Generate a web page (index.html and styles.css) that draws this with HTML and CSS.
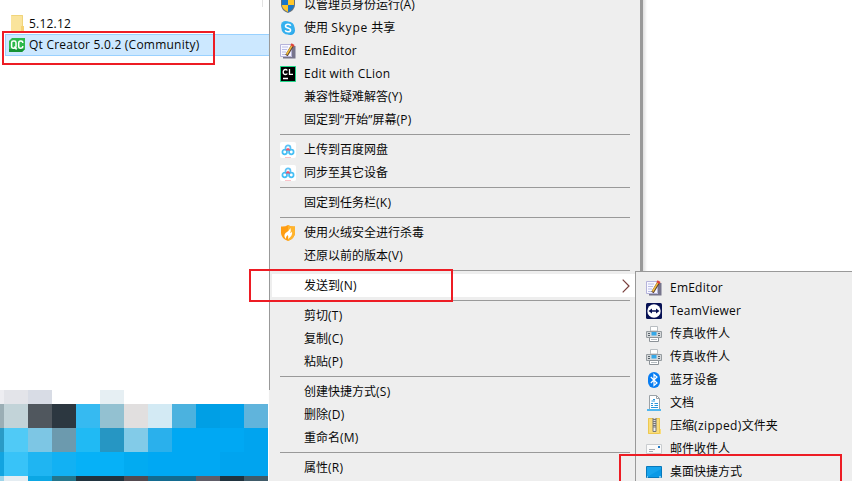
FILE: index.html
```
<!DOCTYPE html>
<html lang="zh-CN">
<head>
<meta charset="utf-8">
<title>Qt Creator</title>
<link rel="stylesheet" href="styles.css">
</head>
<body>
<svg width="0" height="0" class="defs">
  <defs>
    <g id="editor"><path d="M.5 1.500h11v12H.5z" fill="#f8f8ff" stroke="#b5b3da"/><path d="M2 4h6M2 6.500h5M2 9h4M2 11.500h4" stroke="#b9bce6"/><path d="M12 3h3.500v12.500H3V14h9z" fill="#77758c"/><path d="M12.800 2 6.500 12.500" stroke="#5a4030" stroke-width="2.800"/><path d="M12.300 2.200 6.600 11.500" stroke="#f3bd3c" stroke-width="1.600"/><path d="m11 1.200 3 1.800" stroke="#e0453a" stroke-width="2.200"/></g>
    <g id="cloud"><rect width="16" height="16" rx="2" fill="#fff"/><g fill="none" stroke-width="1.700"><circle cx="8" cy="5.800" r="2.500" stroke="#5cc2f7"/><circle cx="4.700" cy="10" r="2.300" stroke="#45bff5"/><circle cx="11.300" cy="10" r="2.300" stroke="#45bff5"/><path d="m6.300 8.300 1.700-1.500 1.800 1.700" stroke="#f0566d"/></g><path d="M5 15.500h6" stroke="#f6a8b0" stroke-width=".7"/></g>
    <g id="printer"><path d="M4.500.5h7V5h-7z" fill="#fff" stroke="#b8bdc1"/><path d="M.5 5.500h15v6H.5z" fill="#d5d8da" stroke="#969ca0"/><path d="M5.500 6h5v3.500h-5z" fill="#35a8e8"/><path d="M2 7.500h2M2 9.500h2M12 7.500h2M12 9.500h2" stroke="#59636b"/><path d="M3.500 11.500h9v4h-9z" fill="#fff" stroke="#8c9297"/><path d="M5 13.500h6" stroke="#b5bcc1"/></g>
  </defs>
</svg>
<div class="screen">
  <div class="explorer">
    <div class="column-edge"></div>
    <div class="files">
      <div class="file">
        <svg viewBox="0 0 16 16"><path d="M2 0h12v11h1v5H2z" fill="#fae49c"/><path d="M2.500.5h11V11" fill="none" stroke="#f0d47b"/><path d="M12 11h3v5h-3z" fill="#f6d272"/></svg>
        <span class="latin">5.12.12</span>
      </div>
      <div class="file selected">
        <svg viewBox="0 0 16 16"><path d="M3 1h13v11l-3 3H0V4z" fill="#2cb84b"/><path d="M0 12v3h13l3-3z" fill="#159335"/><g fill="none" stroke="#fff" stroke-width="1.500"><rect x="2.600" y="4" width="4.400" height="7.200" rx="1.700"/><path d="m5.400 9.500 2.200 3M13.700 6V5q-.4-1-2-1-2 0-2 2v3.200q0 2 2 2 1.600 0 2-1.200v-1"/></g></svg>
        <span class="latin">Qt Creator 5.0.2 (Community)</span>
      </div>
    </div>
    <div class="mosaic">
      <i class="e0"></i><i class="e1"></i><i class="e2"></i><i></i><i></i><i class="e5"></i><i></i><i></i><i></i><i></i><i></i><i></i>
      <i class="a0"></i><i class="a1"></i><i class="a2"></i><i class="a3"></i><i class="a4"></i><i class="a5"></i><i class="a6"></i><i class="a7"></i><i class="a8"></i><i class="a9"></i><i class="a10"></i><i class="a11"></i>
      <i class="b0"></i><i class="b1"></i><i class="b2"></i><i class="b3"></i><i class="b4"></i><i class="b5"></i><i class="b6"></i><i class="b7"></i><i class="b8"></i><i class="b8"></i><i class="b8"></i><i class="b11"></i>
      <i class="c0"></i><i class="c1"></i><i class="c2"></i><i class="c3"></i><i class="c4"></i><i class="c4"></i><i class="c6"></i><i class="b8"></i><i class="b8"></i><i class="b8"></i><i class="b11"></i><i class="b11"></i>
      <i class="d0"></i><i class="d1"></i><i class="d2"></i><i class="d3"></i><i class="d4"></i><i class="d4"></i><i class="d6"></i><i class="d7"></i><i class="d7"></i><i class="d9"></i><i class="d4"></i><i class="d11"></i>
    </div>
  </div>

  <div class="menu main-menu">
    <div class="item"><svg viewBox="0 0 16 16"><path d="M8 0 15 2v6q0 5-7 8-7-3-7-8V2z" fill="#66727d"/><path d="M8 1v7H2V3z" fill="#1976c9"/><path d="M8 1v7h6V3z" fill="#ffc62a"/><path d="M2 8h6v7Q2 12 2 8z" fill="#ffc62a"/><path d="M14 8H8v7q6-3 6-7z" fill="#1976c9"/></svg><span>以管理员身份运行(A)</span></div>
    <div class="item"><svg viewBox="0 0 16 16"><circle cx="5.500" cy="5.500" r="4.500" fill="#3bb5f0"/><circle cx="10.500" cy="10.500" r="4.500" fill="#2aa6ea"/><circle cx="8" cy="8" r="6.600" fill="#35b0ee"/><path d="M10.700 5.700Q10.300 4.300 8 4.300q-2.500 0-2.500 1.800 0 1.400 2.500 1.900t2.600 1.900q0 1.900-2.600 1.900-2.300 0-2.800-1.600" fill="none" stroke="#fff" stroke-width="1.500"/></svg><span>使用 <b class="wide">Skype</b> 共享</span></div>
    <div class="item"><svg viewBox="0 0 16 16"><use href="#editor"/></svg><span class="latin">EmEditor</span></div>
    <div class="item"><svg viewBox="0 0 16 16"><path d="M.5.5h15v15H.5z" fill="#000" stroke="#1ed889"/><path d="M7.300 4.500Q6.800 3.500 5.500 3.500 3.200 3.500 3.200 6t2.300 2.500q1.300 0 1.800-1M9.500 3v5.300h3.500M3 12.500h5" fill="none" stroke="#fff" stroke-width="1.300"/></svg><span class="latin">Edit with CLion</span></div>
    <div class="item"><span>兼容性疑难解答<b class="key">(Y)</b></span></div>
    <div class="item"><span>固定到<q>“</q>开始<q>”</q>屏幕<b class="key">(P)</b></span></div>
    <hr>
    <div class="item"><svg viewBox="0 0 16 16"><use href="#cloud"/></svg><span>上传到百度网盘</span></div>
    <div class="item"><svg viewBox="0 0 16 16"><use href="#cloud"/></svg><span>同步至其它设备</span></div>
    <hr>
    <div class="item"><span>固定到任务栏<b class="key">(K)</b></span></div>
    <hr>
    <div class="item"><svg viewBox="0 0 16 16"><path d="M8 0q3 2 7 1.500V8q0 5-7 8-7-3-7-8V1.500Q5 2 8 0z" fill="#ff9d12"/><path d="M8 0q3 2 7 1.500V8q0 5-7 8z" fill="#ffb42d"/><path d="M10.500 3q.8 3-.5 5 1.500-.3 2-1.500 1 4-4 7.500 1-3-.5-4-2 2-1.500 4-3-3-.5-6Q9.500 5.500 10.500 3z" fill="#fff"/></svg><span>使用火绒安全进行杀毒</span></div>
    <div class="item"><span>还原以前的版本<b class="key">(V)</b></span></div>
    <hr>
    <div class="item active"><span>发送到<b class="key">(N)</b></span><svg class="chevron" viewBox="0 0 8 14"><path d="m.7.700 6.300 6.300-6.300 6.300" fill="none" stroke="#793f3c" stroke-width="1.200"/></svg></div>
    <hr>
    <div class="item"><span>剪切<b class="key">(T)</b></span></div>
    <div class="item"><span>复制<b class="key">(C)</b></span></div>
    <div class="item"><span>粘贴<b class="key">(P)</b></span></div>
    <hr>
    <div class="item"><span>创建快捷方式<b class="key">(S)</b></span></div>
    <div class="item"><span>删除<b class="key">(D)</b></span></div>
    <div class="item"><span>重命名<b class="key">(M)</b></span></div>
    <hr>
    <div class="item"><span>属性<b class="key">(R)</b></span></div>
  </div>

  <div class="menu submenu">
    <div class="item"><svg viewBox="0 0 16 16"><use href="#editor"/></svg><span class="latin">EmEditor</span></div>
    <div class="item"><svg viewBox="0 0 16 16"><rect width="16" height="16" rx="1.500" fill="#071154"/><circle cx="8" cy="8" r="6.700" fill="#fff"/><path d="m2.500 8 3.500-2.500v1.800h4V5.500L13.500 8 10 10.500V8.700H6v1.800z" fill="#071154"/></svg><span class="latin">TeamViewer</span></div>
    <div class="item"><svg viewBox="0 0 16 16"><use href="#printer"/></svg><span>传真收件人</span></div>
    <div class="item"><svg viewBox="0 0 16 16"><use href="#printer"/></svg><span>传真收件人</span></div>
    <div class="item"><svg viewBox="0 0 16 16"><rect x="2" width="12" height="16" rx="6" fill="#087df2"/><path d="m4.800 5 6.200 6-3 2.500v-11L11 5l-6.200 6" fill="none" stroke="#fff" stroke-width="1.200"/></svg><span>蓝牙设备</span></div>
    <div class="item"><svg viewBox="0 0 16 16"><path d="M3.500.5h7l3 3v11h-10z" fill="#fff" stroke="#9aa1a6"/><path d="M10.500.5v3h3" fill="none" stroke="#9aa1a6"/><path d="M7 4.500h2M5.500 6H9M5 8.500h2M8.500 8.500H12M5 10.500h2M8.500 10.500H12M5 12.500h7" stroke="#2997dc" stroke-width="1.200"/><path d="M1 14h14v2H1z" fill="#50b7ef"/></svg><span>文档</span></div>
    <div class="item"><svg viewBox="0 0 16 16"><path d="M2 0h12v11h1v5H2z" fill="#f9dd7c"/><path d="M2.500.5h11v15h-11z" fill="none" stroke="#edc851"/><path d="M6.500 0h4v9h-4z" fill="#777"/><path d="M8.500 0v9" stroke="#ddd" stroke-width="2" stroke-dasharray="1 1"/><path d="M7 9h3v4.500H7z" fill="#eee" stroke="#777"/></svg><span>压缩<b>(zipped)</b>文件夹</span></div>
    <div class="item"><svg viewBox="0 0 16 16"><path d="M.5 3.500h15v9H.5z" fill="#fafafa" stroke="#c9cccf"/><path d="M12 5h2v2h-2z" fill="#247ac4"/><path d="M3 8.500h6M3 10.500h4" stroke="#a5adb4"/></svg><span>邮件收件人</span></div>
    <div class="item"><svg viewBox="0 0 16 16"><path d="M.5 2.500h15v11H.5z" fill="#17a4ed" stroke="#0879bb"/><path d="M1 13 15 5v8z" fill="#0a99e6"/><path d="M1 13h1M13 13h2" stroke="#f3f8fb"/></svg><span>桌面快捷方式</span></div>
  </div>

  <div class="mark mark-file"></div>
  <div class="mark mark-send"></div>
  <div class="mark mark-desktop"></div>
</div>
</body>
</html>
```
FILE: styles.css
```
* { box-sizing: border-box; }
body { margin: 0; background: #fff; }
.defs { position: absolute; }
.screen {
  position: relative;
  display: flex;
  width: 852px;
  height: 481px;
  overflow: hidden;
  color: #080808;
  font: 12px/23px "Open Sans", "Noto Sans CJK SC", sans-serif;
  white-space: nowrap;
}
svg { display: block; flex: none; width: 16px; height: 16px; }
b { font-weight: 400; letter-spacing: .4px; }
.wide { letter-spacing: .8px; }
.key { letter-spacing: .25px; }
q { quotes: none; letter-spacing: 0; }
.latin { letter-spacing: .22px; }

.explorer { display: flex; flex-direction: column; width: 269px; }
.column-edge { width: 1px; height: 7px; margin-left: 262px; background: #e2e2e2; }
.files { flex: 1; padding-top: 5px; }
.file {
  display: flex;
  align-items: center;
  gap: 4px;
  height: 22px;
  margin-left: 5px;
  padding-left: 4px;
  line-height: 22px;
}
.file:first-child span { padding-top: 1px; }
.selected { background: #cce8ff; border: 1px solid #99d1ff; border-right: 0; padding-left: 3px; }
.mosaic {
  display: grid;
  grid-template-columns: 4px repeat(11, 24px);
  grid-template-rows: 14px 24px 24px 24px 5px;
}
.e0 { background: #ededf1; } .e1 { background: #e3e4e9; } .e2 { background: #d8dce5; } .e5 { background: #e6eff3; }
.a0 { background: #9baeb5; } .a1 { background: #c2d3d8; } .a2 { background: #50575e; } .a3 { background: #2c3740; }
.a4 { background: #36baf1; } .a5 { background: #93c1d1; } .a6 { background: #e1dfdf; } .a7 { background: #d3eaf4; }
.a8 { background: #4bb2df; } .a9 { background: #009fe5; } .a10 { background: #00a1eb; } .a11 { background: #60b4dc; }
.b0 { background: #2a9bc6; } .b1 { background: #50caf6; } .b2 { background: #7dc6e4; } .b3 { background: #6c9aae; }
.b4 { background: #20baf4; } .b5 { background: #2696c3; } .b6 { background: #82cbe8; } .b7 { background: #2ab0ec; }
.b8 { background: #00a8f3; } .b11 { background: #00a4ef; }
.c0 { background: #12a4e0; } .c1 { background: #38c3f8; } .c2 { background: #1fb5f2; } .c3 { background: #12b1f3; }
.c4 { background: #06b1f7; } .c6 { background: #02abf1; }
.d0 { background: #9cd4e9; } .d1 { background: #e5edf2; } .d2 { background: #0ba7e4; } .d3 { background: #24758b; }
.d4 { background: #20333f; } .d6 { background: #534a50; } .d7 { background: #136b90; } .d9 { background: #605d68; } .d11 { background: #405b69; }

.menu { position: absolute; background: #eee; border: 1px solid #999; }
.main-menu {
  left: 269px;
  top: -10px;
  width: 374px;
  height: 520px;
  padding: 2px;
  border-right: 3px solid #999;
  border-left: 0;
  padding-left: 3px;
  box-shadow: 2px 0 3px #0002;
}
.main-menu::before {
  content: "";
  position: absolute;
  left: 0;
  top: 0;
  width: 1px;
  height: 399px;
  background: #999;
}
.submenu { left: 635px; top: 271px; width: 240px; height: 230px; padding: 4px 2px; }
.item { display: flex; align-items: center; gap: 8px; height: 23px; padding-left: 8px; }
.item span:first-child { margin-left: 24px; }
.main-menu hr { height: 1px; margin: 3px 8px; border: 0; background: #999; }
.active { background: #fff; }
.chevron { width: 8px; height: 14px; margin: 0 8px 0 auto; }

.mark { position: absolute; border: 2px solid #ed1c24; }
.mark-file { left: 2px; top: 31px; width: 213px; height: 34px; }
.mark-send { left: 249px; top: 269px; width: 204px; height: 33px; }
.mark-desktop { left: 619px; top: 454px; width: 223px; height: 40px; }
```
